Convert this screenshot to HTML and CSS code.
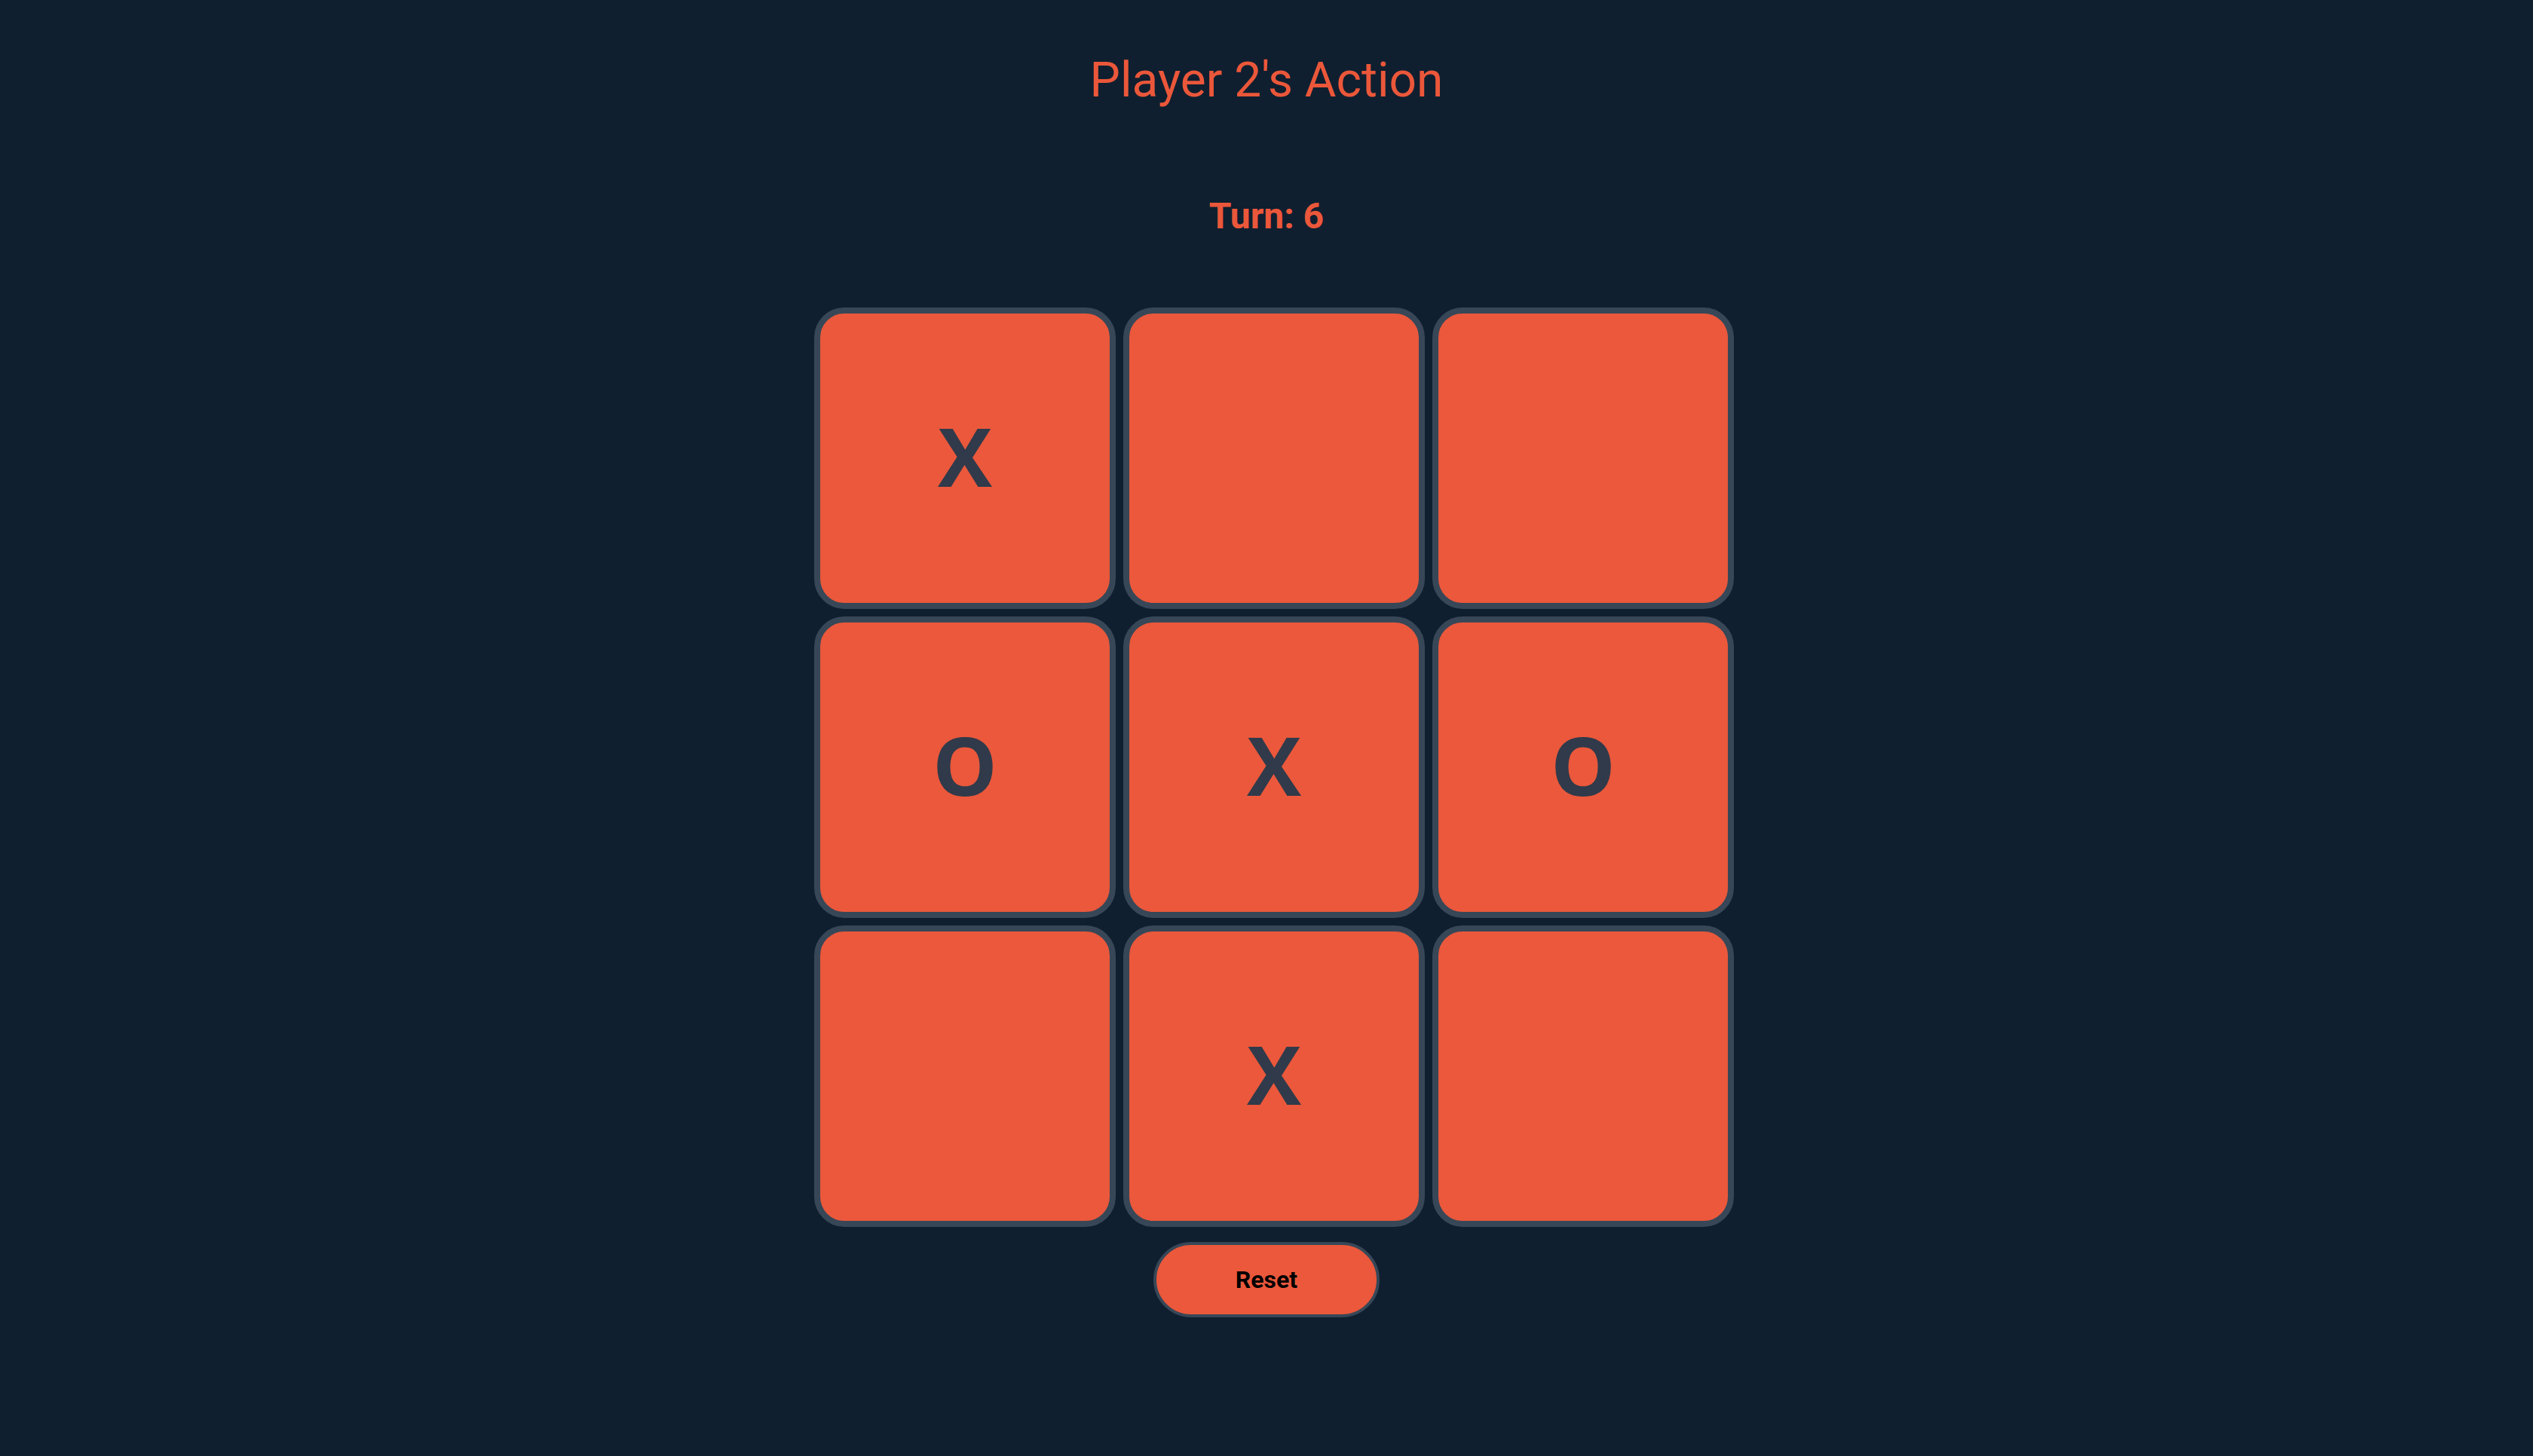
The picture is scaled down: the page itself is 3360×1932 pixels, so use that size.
FILE: index.html
```html
<!DOCTYPE html>
<html lang="en">
<head>
<meta charset="utf-8">
<title>Tic Tac Toe</title>
<link rel="stylesheet" href="styles.css">
</head>
<body>
<main class="game">
  <h1 class="title">Player 2's Action</h1>
  <p class="turn">Turn: 6</p>
  <div class="board">
    <button class="cell">X</button>
    <button class="cell"></button>
    <button class="cell"></button>
    <button class="cell">O</button>
    <button class="cell">X</button>
    <button class="cell">O</button>
    <button class="cell"></button>
    <button class="cell">X</button>
    <button class="cell"></button>
  </div>
  <button class="reset">Reset</button>
</main>
</body>
</html>
```
FILE: styles.css
```css
html, body {
  margin: 0;
  padding: 0;
  background: #0f1f2f;
  min-height: 100%;
}
body {
  font-family: Roboto, "Liberation Sans", sans-serif;
  height: 1932px;
}
.game {
  display: flex;
  flex-direction: column;
  align-items: center;
}
.title {
  margin: 75px 0 0;
  font-size: 64px;
  line-height: 64px;
  font-weight: 400;
  color: #eb573a;
}
.turn {
  margin: 124px 0 0;
  font-size: 48px;
  line-height: 48px;
  font-weight: 700;
  color: #eb573a;
}
.board {
  margin-top: 97px;
  display: grid;
  grid-template-columns: repeat(3, 400px);
  grid-auto-rows: 400px;
  gap: 10px;
  padding-left: 20px;
}
.cell {
  box-sizing: border-box;
  width: 400px;
  height: 400px;
  margin: 0;
  padding: 0 0 8px;
  background: #eb583b;
  border: 8px solid #374757;
  border-radius: 40px;
  font-family: "Open Sans", "Noto Sans", sans-serif;
  font-size: 108px;
  font-weight: 700;
  color: #303a4a;
  display: flex;
  align-items: center;
  justify-content: center;
}
.reset {
  box-sizing: border-box;
  margin-top: 20px;
  width: 300px;
  height: 100px;
  background: #eb583b;
  border: 4px solid #374757;
  border-radius: 50px;
  font-family: Roboto, sans-serif;
  font-size: 32px;
  font-weight: 700;
  color: #000;
  padding: 0;
}
```
